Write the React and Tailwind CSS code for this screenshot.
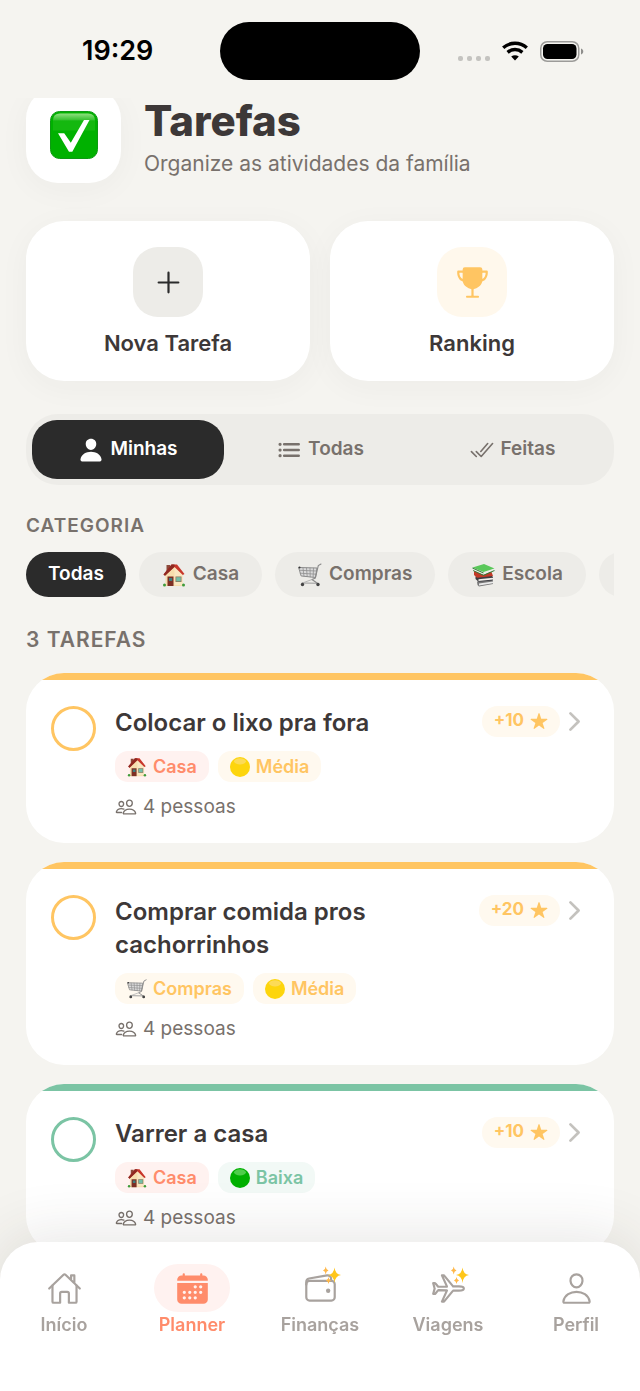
import {
  IoAdd, IoAirplaneOutline, IoCalendar, IoCheckmarkDoneOutline, IoChevronForward, IoHomeOutline,
  IoList, IoPeopleOutline, IoPerson, IoPersonOutline, IoStar, IoTrophy, IoWalletOutline,
} from "react-icons/io5";

function CheckEmoji({ className }) {
  return (
    <svg viewBox="0 0 48 48" className={className} aria-hidden="true">
      <defs>
        <linearGradient id="gloss" x1="0" y1="0" x2="0" y2="1">
          <stop offset="0" stopColor="#8fe07f" />
          <stop offset="1" stopColor="#2fbf2a" />
        </linearGradient>
      </defs>
      <rect x="0.5" y="0.5" width="47" height="47" rx="9" fill="#00b100" stroke="#0d9a12" />
      <path d="M3 19.5V9.500q0-7 7-7h28q7 0 7 7v10z" fill="#14b80f" />
      <path d="M3 9.500q0-7 7-7h28q7 0 7 7z" fill="url(#gloss)" />
      <path d="M8 22.300h6.200l6.600 9.500L34 9h5.500L22.300 40.800h-3.300z" fill="#fff" />
    </svg>
  );
}

function HouseEmoji({ className }) {
  return (
    <svg viewBox="0 0 24 24" className={className} aria-hidden="true">
      <path d="M4.500 2h3.500v6H4.500z" fill="#8c4a3a" />
      <path d="M3.500 11.500 12 3l8.500 8v12h-17z" fill="#f6deae" />
      <path d="M12.500 22h8V11.500l-8-8z" fill="#f9e7c2" />
      <path d="M1.500 11.500 9.500 1.500h5.500L22.500 11l-1.700 1-8.300-8L3 12.800z" fill="#c8372b" />
      <path d="M1.500 11.500 9.500 1.500h3v2.200L3 12.800z" fill="#8e2a22" />
      <path d="M5.500 13.500h6V23h-6z" fill="#7d2f25" />
      <path d="M7 15h3.200v3H7z" fill="#3f7f80" />
      <path d="M13.500 13.500h6v5.500h-6z" fill="#8a7158" />
      <path d="M14.200 14.200h4.600v4.100h-4.600z" fill="#72bfa6" />
      <circle cx="2.500" cy="22" r="1.500" fill="#3f9b3a" />
      <circle cx="21.500" cy="22" r="1.500" fill="#3f9b3a" />
    </svg>
  );
}

function CartEmoji({ className }) {
  return (
    <svg viewBox="0 0 24 24" className={className} aria-hidden="true" fill="none" strokeLinecap="round">
      <path d="M1 4.500 19 5 17.500 14.500 3.500 13z" fill="#dadada" stroke="#8b8b8b" strokeWidth="1" />
      <path d="M1.500 7.300 18.500 8M2.200 10.200 18 11.200M5 5l1 8.200M8.500 5l.7 8.500M12 5l.2 8.900M15.500 5.200l-.4 8.900" stroke="#8f8f8f" strokeWidth=".8" />
      <path d="M23 1 20.300 2.500 17.300 15 14 16.500 19 20" stroke="#8a8a8a" strokeWidth="1.100" />
      <path d="M4 20 20 20.300" stroke="#9a9a9a" strokeWidth="1.100" />
      <path d="M14 16.500 4.500 20" stroke="#b0b0b0" strokeWidth=".9" />
      <circle cx="4.500" cy="21.500" r="1.700" fill="#444" />
      <circle cx="20" cy="21.500" r="1.700" fill="#444" />
      <circle cx="1.500" cy="4.500" r="1" fill="#333" />
    </svg>
  );
}

function BooksEmoji({ className }) {
  return (
    <svg viewBox="0 0 24 24" className={className} aria-hidden="true">
      <path d="M6 18.500 20 16.500 22 18v3L8 23.500 6.500 22z" fill="#777" />
      <path d="M8 20.500 22 18.500v1.800L8 22.500z" fill="#e9e9e9" />
      <path d="M4.500 13.500 20 12l2 2v3.500L7.500 18.800 4.500 16z" fill="#3d3d42" />
      <path d="M7.500 16.200 22 14.800v1.800L7.500 18z" fill="#f2efea" />
      <path d="M3 7.500 20.500 9l1.500 4-16 1.800L3 12z" fill="#c23a28" />
      <path d="M1.500 4.500 13 1l10.500 4.500-11 5.300z" fill="#5ac85a" />
      <path d="M1.500 4.500 12.500 9l11-3.500v1.700L12.500 12 2 7.500z" fill="#eeeeea" />
      <path d="M1.500 4.500 12.500 9.500v1L1.500 5.500zM12.500 11.700 2 7l.2 1 10.300 4.700 11-4.800v-.9z" fill="#2f7a35" />
    </svg>
  );
}

function Ball({ className, base, light }) {
  return (
    <svg viewBox="0 0 22 22" className={className} aria-hidden="true">
      <circle cx="11" cy="11" r="11" fill={base} />
      <ellipse cx="11" cy="4.800" rx="6.500" ry="3.400" fill={light} opacity=".8" />
    </svg>
  );
}

function YellowBall({ className }) {
  return <Ball className={className} base="#fdd50d" light="#fbdc6a" />;
}

function GreenBall({ className }) {
  return <Ball className={className} base="#00b000" light="#62d45c" />;
}

function Sparkles({ className }) {
  return (
    <svg viewBox="0 0 20 20" className={className} aria-hidden="true" fill="#ffc61a">
      <path d="M12.500 1.500Q13.100 8.100 19 9 13.100 9.900 12.500 17 11.900 9.900 6 9 11.900 8.100 12.500 1.500z" />
      <path d="M3.700.5Q4 3.800 6.500 4.500 4 5.200 3.700 8.500 3.400 5.200 1 4.500 3.400 3.800 3.700.5z" fill="#ffb84a" />
      <path d="M6.500 11Q6.800 13.800 9 14.500 6.800 15.200 6.500 18 6.200 15.200 4 14.500 6.200 13.800 6.500 11z" fill="#ffb84a" />
    </svg>
  );
}

function StatusBar() {
  return (
    <header className="sticky top-0 z-10 grid h-[98px] grid-cols-[1fr_200px_1fr] items-start bg-[#f5f4f0] pt-[22px]">
      <div className="flex h-[58px] items-center pl-[82px] text-[27px] font-semibold text-black">19:29</div>
      <div className="h-[58px] rounded-full bg-black" />
      <div className="flex h-[58px] items-center justify-end gap-3 pr-14">
        <div className="flex gap-1 pt-[14px]">
          {[0, 1, 2, 3].map((dot) => (
            <span key={dot} className="size-[5px] rounded-[2px] bg-[#c4c3c0]" />
          ))}
        </div>
        <svg viewBox="0 0 26 20" className="h-5 w-[26px]" aria-label="Wi-Fi" role="img" fill="none" stroke="#000" strokeWidth="3.400">
          <path d="M1.200 6.800C8 .7 18 .7 24.800 6.800" />
          <path d="M5.600 11.400C10 7.600 16 7.600 20.400 11.400" />
          <path d="M13 19.500 9.200 15.500C11.500 13.700 14.500 13.700 16.800 15.500z" fill="#000" stroke="none" />
        </svg>
        <svg viewBox="0 0 44 21" className="h-[21px] w-11" aria-label="Bateria" role="img">
          <rect x="0.750" y="0.750" width="38" height="19.500" rx="6.500" fill="none" stroke="#9c9b99" strokeWidth="1.500" />
          <rect x="3" y="3" width="33.500" height="15" rx="4.500" fill="#000" />
          <path d="M41 7.500c3 .8 3 5.200 0 6z" fill="#8f8e8c" />
        </svg>
      </div>
    </header>
  );
}

function ActionCard({ label, icon: Icon, boxClass, iconClass }) {
  return (
    <button
      type="button"
      className="flex flex-1 flex-col items-center gap-[13px] rounded-[38px] bg-white px-4 pt-[26px] pb-[25px] shadow-[0_6px_32px_rgba(60,50,40,0.04)]"
    >
      <span className={`flex size-[70px] items-center justify-center rounded-[25px] ${boxClass}`}>
        <Icon className={iconClass} />
      </span>
      <span className="text-[22px] leading-[26px] font-semibold text-[#3d3838]">{label}</span>
    </button>
  );
}

const tabs = [
  { label: "Minhas", icon: IoPerson, active: true },
  { label: "Todas", icon: IoList },
  { label: "Feitas", icon: IoCheckmarkDoneOutline },
];

const categories = [
  { label: "Todas", active: true },
  { label: "Casa", icon: HouseEmoji },
  { label: "Compras", icon: CartEmoji },
  { label: "Escola", icon: BooksEmoji },
];

const tagStyles = {
  coral: "bg-[#fff2f0] text-[#ff8c6b]",
  amber: "bg-[#fff9ef] text-[#ffc562]",
  green: "bg-[#f2f9f6] text-[#7bc4a4]",
};

const home = { label: "Casa", icon: HouseEmoji, tone: "coral" };
const medium = { label: "Média", icon: YellowBall, tone: "amber" };

const tasks = [
  { title: "Colocar o lixo pra fora", points: 10, tags: [home, medium], bar: "bg-[#ffc562]", ring: "border-[#ffc562]" },
  {
    title: "Comprar comida pros cachorrinhos",
    points: 20,
    tags: [{ label: "Compras", icon: CartEmoji, tone: "amber" }, medium],
    bar: "bg-[#ffc562]",
    ring: "border-[#ffc562]",
  },
  {
    title: "Varrer a casa",
    points: 10,
    tags: [home, { label: "Baixa", icon: GreenBall, tone: "green" }],
    bar: "bg-[#7bc4a4]",
    ring: "border-[#7bc4a4]",
  },
];

function TaskCard({ task }) {
  return (
    <li className="overflow-hidden rounded-[38px] bg-white">
      <div className={`h-[7px] ${task.bar}`} />
      <div className="flex items-start px-[25px] pt-[26px] pb-[23px]">
        <input
          type="checkbox"
          aria-label={task.title}
          className={`size-[45px] shrink-0 appearance-none rounded-full border-3 ${task.ring}`}
        />
        <div className="ml-[19px] min-w-0 flex-1">
          <h3 className="max-w-[300px] text-[24px] leading-[33px] font-semibold text-[#3d3838]">{task.title}</h3>
          <div className="mt-3 flex gap-[9px]">
            {task.tags.map(({ label, icon: Icon, tone }) => (
              <span
                key={label}
                className={`flex h-[31px] items-center gap-[6px] rounded-[13px] px-3 text-[18px] font-semibold ${tagStyles[tone]}`}
              >
                <Icon className="size-5" />
                {label}
              </span>
            ))}
          </div>
          <p className="mt-3 flex h-[26px] items-center gap-[6px] text-[19px] text-[#78716c]">
            <IoPeopleOutline className="size-[22px]" />4 pessoas
          </p>
        </div>
        <div className="flex h-[30px] items-center">
          <span className="flex h-[31px] items-center gap-[6px] rounded-full bg-[#fff9ef] px-3 text-[17px] font-bold text-[#ffc562]">
            +{task.points}
            <IoStar className="size-[18px]" />
          </span>
          <button type="button" aria-label={`Abrir ${task.title}`} className="text-[#c4c2be]">
            <IoChevronForward className="size-[29px]" />
          </button>
        </div>
      </div>
    </li>
  );
}

const navItems = [
  { label: "Início", icon: IoHomeOutline },
  { label: "Planner", icon: IoCalendar, active: true },
  { label: "Finanças", icon: IoWalletOutline, premium: true },
  { label: "Viagens", icon: IoAirplaneOutline, premium: true },
  { label: "Perfil", icon: IoPersonOutline },
];

function BottomNav() {
  return (
    <nav className="fixed inset-x-0 bottom-0 z-20 grid grid-cols-5 rounded-t-[38px] bg-white pt-[22px] pb-[54px] shadow-[0_-6px_60px_rgba(60,50,40,0.12)]">
      {navItems.map(({ label, icon: Icon, active, premium }) => (
        <a
          key={label}
          href="#"
          aria-current={active ? "page" : undefined}
          className={`flex flex-col items-center gap-[1px] ${active ? "text-[#ff8c6b]" : "text-[#a8a29e]"}`}
        >
          <span className={`relative flex h-12 w-[76px] items-center justify-center rounded-full ${active ? "bg-[#fff2f0]" : ""}`}>
            <Icon className="size-[35px]" />
            {premium && <Sparkles className="absolute top-[2px] right-4 size-5" />}
          </span>
          <span className="text-[18px] leading-6 font-semibold">{label}</span>
        </a>
      ))}
    </nav>
  );
}

export default function App() {
  return (
    <div className="min-h-screen bg-[#f5f4f0] font-['Inter',sans-serif]">
      <StatusBar />
      <main className="-mt-[11px] px-[26px] pb-32">
        <div className="flex items-center gap-[23px]">
          <div className="flex h-24 w-[95px] items-center justify-center rounded-[32px] bg-white shadow-[0_6px_32px_rgba(60,50,40,0.04)]">
            <CheckEmoji className="size-12" />
          </div>
          <div>
            <h1 className="text-[42px] leading-[58px] font-extrabold text-[#3d3838]">Tarefas</h1>
            <p className="text-[21px] leading-7 text-[#78716c]">Organize as atividades da família</p>
          </div>
        </div>

        <div className="mt-[38px] flex gap-5">
          <ActionCard label="Nova Tarefa" icon={IoAdd} boxClass="bg-[#edece8]" iconClass="size-[35px] text-[#2b2b2b]" />
          <ActionCard label="Ranking" icon={IoTrophy} boxClass="bg-[#fff8ec]" iconClass="size-[35px] text-[#ffc562]" />
        </div>

        <div role="tablist" className="mt-[33px] grid grid-cols-3 rounded-[32px] bg-[#edece8] p-[6px]">
          {tabs.map(({ label, icon: Icon, active }) => (
            <button
              key={label}
              type="button"
              role="tab"
              aria-selected={Boolean(active)}
              className={`flex h-[59px] items-center justify-center gap-[6px] rounded-[25px] text-[19px] font-semibold ${
                active ? "bg-[#2b2b2b] text-white" : "text-[#78716c]"
              }`}
            >
              <Icon className="size-[26px]" />
              {label}
            </button>
          ))}
        </div>

        <h2 className="mt-[29px] text-[19px] leading-6 font-semibold tracking-[1px] text-[#78716c]">CATEGORIA</h2>
        <div className="mt-[14px] flex gap-[13px] overflow-hidden">
          {categories.map(({ label, icon: Icon, active }) => (
            <button
              key={label}
              type="button"
              className={`flex h-[45px] shrink-0 items-center gap-[7px] rounded-full text-[19px] font-semibold ${
                Icon ? "px-[23px]" : "px-[22px]"
              } ${active ? "bg-[#2b2b2b] text-white" : "bg-[#edece8] text-[#78716c]"}`}
            >
              {Icon && <Icon className="size-6" />}
              {label}
            </button>
          ))}
          <button type="button" aria-label="Mais categorias" className="h-[45px] w-24 shrink-0 rounded-full bg-[#edece8]" />
        </div>

        <h2 className="mt-[29px] text-[21px] leading-7 font-semibold tracking-[1px] text-[#78716c]">3 TAREFAS</h2>
        <ul className="mt-[19px] flex flex-col gap-[19px]">
          {tasks.map((task) => (
            <TaskCard key={task.title} task={task} />
          ))}
        </ul>
      </main>
      <BottomNav />
    </div>
  );
}
